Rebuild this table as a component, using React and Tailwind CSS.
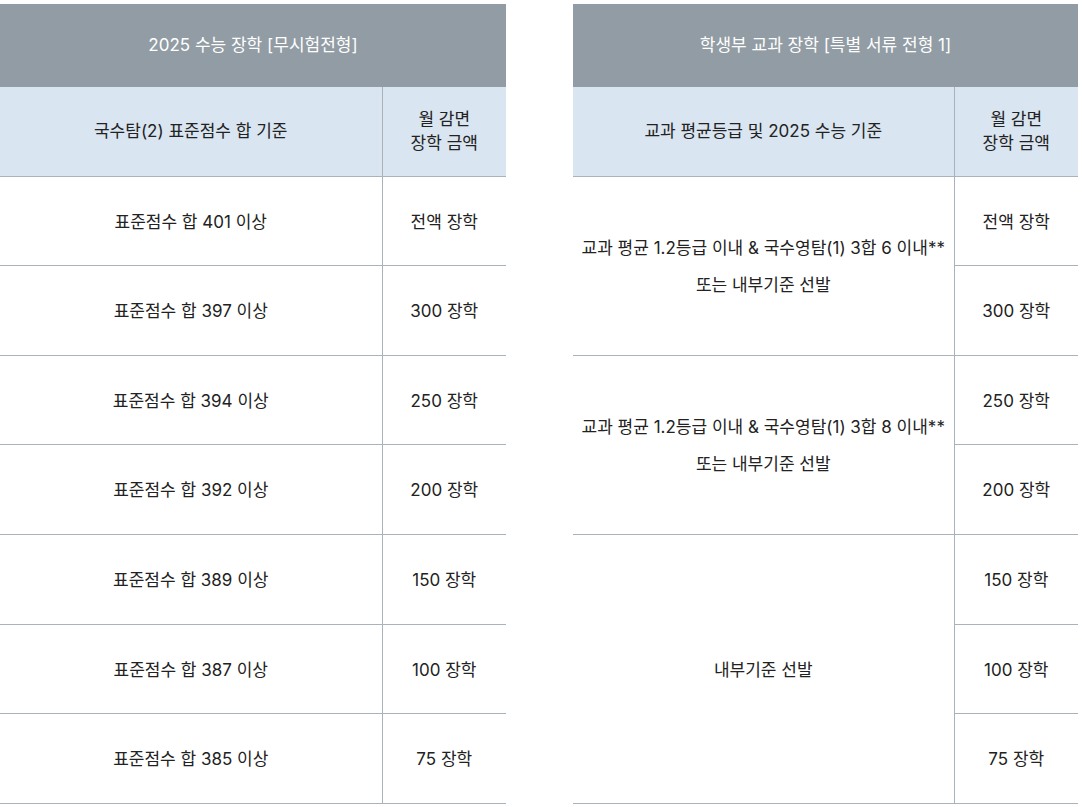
export default function App() {
  const left = [
    ["표준점수 합 401 이상", "전액 장학"],
    ["표준점수 합 397 이상", "300 장학"],
    ["표준점수 합 394 이상", "250 장학"],
    ["표준점수 합 392 이상", "200 장학"],
    ["표준점수 합 389 이상", "150 장학"],
    ["표준점수 합 387 이상", "100 장학"],
    ["표준점수 합 385 이상", "75 장학"],
  ];
  const amounts = ["전액 장학", "300 장학", "250 장학", "200 장학", "150 장학", "100 장학", "75 장학"];
  const font = { fontFamily: 'Inter, "Noto Sans CJK KR", sans-serif' };
  const cellB = "border-b border-[#a9b3bc]";
  return (
    <div className="bg-white w-[1082px] h-[807px] pt-[4px] flex text-[17px] text-[#222]" style={font}>
      <table className="w-[506px] h-[800px] border-collapse table-fixed">
        <colgroup>
          <col className="w-[382px]" />
          <col className="w-[124px]" />
        </colgroup>
        <thead>
          <tr className="h-[83px] bg-[#919ca4]">
            <th colSpan={2} className="font-normal text-white text-center">2025 수능 장학 [무시험전형]</th>
          </tr>
          <tr className="h-[89px] bg-[#d9e5f0]">
            <th className={`font-normal text-center ${cellB} border-r border-r-[#a9b3bc]`}>국수탐(2) 표준점수 합 기준</th>
            <th className={`font-normal text-center leading-[24px] ${cellB}`}>월 감면<br />장학 금액</th>
          </tr>
        </thead>
        <tbody>
          {left.map(([a, b], i) => (
            <tr key={i} className="h-[89.4px]">
              <td className={`text-center pt-[3px] ${cellB} border-r border-r-[#a9b3bc]`}>{a}</td>
              <td className={`text-center pt-[3px] ${cellB}`}>{b}</td>
            </tr>
          ))}
        </tbody>
      </table>
      <table className="w-[505px] h-[800px] ml-[67px] border-collapse table-fixed">
        <colgroup>
          <col className="w-[381px]" />
          <col className="w-[124px]" />
        </colgroup>
        <thead>
          <tr className="h-[83px] bg-[#919ca4]">
            <th colSpan={2} className="font-normal text-white text-center">학생부 교과 장학 [특별 서류 전형 1]</th>
          </tr>
          <tr className="h-[89px] bg-[#d9e5f0]">
            <th className={`font-normal text-center ${cellB} border-r border-r-[#a9b3bc]`}>교과 평균등급 및 2025 수능 기준</th>
            <th className={`font-normal text-center leading-[24px] ${cellB}`}>월 감면<br />장학 금액</th>
          </tr>
        </thead>
        <tbody>
          {amounts.map((b, i) => (
            <tr key={i} className="h-[89.4px]">
              {i === 0 && (
                <td rowSpan={2} className={`text-center pt-[3px] leading-[37px] ${cellB} border-r border-r-[#a9b3bc]`}>
                  교과 평균 1.2등급 이내 &amp; 국수영탐(1) 3합 6 이내**<br />또는 내부기준 선발
                </td>
              )}
              {i === 2 && (
                <td rowSpan={2} className={`text-center pt-[3px] leading-[37px] ${cellB} border-r border-r-[#a9b3bc]`}>
                  교과 평균 1.2등급 이내 &amp; 국수영탐(1) 3합 8 이내**<br />또는 내부기준 선발
                </td>
              )}
              {i === 4 && (
                <td rowSpan={3} className={`text-center pt-[3px] ${cellB} border-r border-r-[#a9b3bc]`}>
                  내부기준 선발
                </td>
              )}
              <td className={`text-center pt-[3px] ${cellB}`}>{b}</td>
            </tr>
          ))}
        </tbody>
      </table>
    </div>
  );
}
